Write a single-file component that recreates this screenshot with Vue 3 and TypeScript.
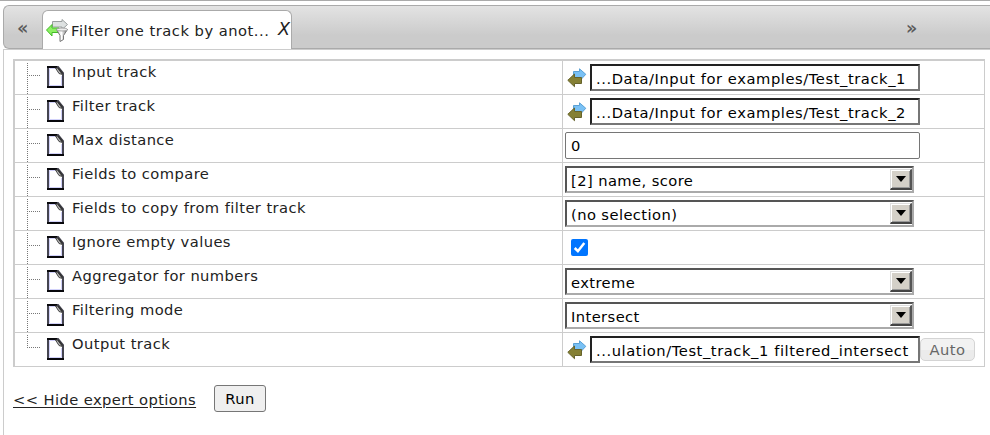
<script setup lang="ts">
interface Field {
  label: string
  kind: 'track' | 'text' | 'select' | 'check'
  value?: string
  auto?: boolean
}

const fields: Field[] = [
  { label: 'Input track', kind: 'track', value: '...Data/Input for examples/Test_track_1' },
  { label: 'Filter track', kind: 'track', value: '...Data/Input for examples/Test_track_2' },
  { label: 'Max distance', kind: 'text', value: '0' },
  { label: 'Fields to compare', kind: 'select', value: '[2] name, score' },
  { label: 'Fields to copy from filter track', kind: 'select', value: '(no selection)' },
  { label: 'Ignore empty values', kind: 'check' },
  { label: 'Aggregator for numbers', kind: 'select', value: 'extreme' },
  { label: 'Filtering mode', kind: 'select', value: 'Intersect' },
  { label: 'Output track', kind: 'track', value: '...ulation/Test_track_1 filtered_intersect', auto: true },
]
</script>

<template>
  <div class="page">
    <nav class="tabs">
      <span class="scroll prev">«</span>
      <div class="tab">
        <svg class="tab-icon" width="24" height="24" viewBox="0 0 24 24">
          <defs>
            <linearGradient id="steel" x1="0" x2="1"><stop offset="0" stop-color="#ccc" /><stop offset=".45" stop-color="#fff" /><stop offset="1" stop-color="#666" /></linearGradient>
          </defs>
          <path d="M6.500 2.500h9.500V.5l5.500 5-5.500 5V8H6.500z" fill="#dde1e1" stroke="#9a9f9f" />
          <path d="M.5 11 6 5.500V9h7v4.500H6V17z" fill="#8cf062" stroke="#43bb28" />
          <path d="M10.500 10.500h11l-4 6v4l-3.500 2v-6z" fill="url(#steel)" stroke="#777" stroke-linejoin="round" />
          <ellipse cx="16" cy="10.500" rx="5.500" ry="1.500" fill="#eee" stroke="#888" stroke-width=".7" />
        </svg>
        <span class="title">Filter one track by anot...</span>
        <span class="close">X</span>
      </div>
      <span class="scroll next">»</span>
    </nav>
    <main class="panel">
      <div class="grid">
        <div v-for="(f, i) in fields" :key="f.label" class="row">
          <div class="name">
            <svg class="branch" width="14" height="33" viewBox="0 0 14 33">
              <path :d="i === fields.length - 1 ? 'M.5 2V15' : 'M.5 2V33'" stroke="#777" stroke-dasharray="1 1" fill="none" />
              <path d="M2 14.500H13" stroke="#777" stroke-dasharray="1 1" fill="none" />
            </svg>
            <svg class="doc" width="17" height="22" viewBox="0 0 17 22">
              <path d="M1 1H11L16 7V21H1z" fill="#fff" stroke="#454550" stroke-width="2" />
              <path d="M2.500 19.500V2.500H9M14.500 10V19.500H2.500" fill="none" stroke="#d2d2fa" />
              <path d="M0 1H10M0 21H17" stroke="#08080c" stroke-width="2" />
              <path d="M8.500 2 12 7.500 15.500 8.500 11 2z" fill="#b5b5b5" stroke="#444" />
              <path d="m11 2 4.500 5.500" stroke="#333" stroke-width="1.500" />
            </svg>
            <span class="label">{{ f.label }}</span>
          </div>
          <div class="value">
            <template v-if="f.kind === 'track'">
              <svg class="swap" width="20" height="20" viewBox="0 0 20 20">
                <path d="M6.500 3.500h6V.8l6.300 5.500-5.300 5.700V9.500h-7z" fill="#79c1f5" stroke="#5ba1d5" stroke-linejoin="round" />
                <path d="M.8 12.300 7.500 6v3.500h7v6H7.500v3.200z" fill="#858034" stroke="#66632c" stroke-linejoin="round" />
              </svg>
              <div class="box track">{{ f.value }}</div>
              <button v-if="f.auto" class="auto" disabled>Auto</button>
            </template>
            <div v-else-if="f.kind === 'text'" class="box plain">{{ f.value }}</div>
            <div v-else-if="f.kind === 'select'" class="box select">
              <span>{{ f.value }}</span>
              <span class="drop">
                <svg width="10" height="6" viewBox="0 0 10 6"><path d="M0 0H10L5 6z" fill="#000" /></svg>
              </span>
            </div>
            <span v-else class="check">
              <svg width="17" height="17" viewBox="0 0 17 17"><path d="m3.700 9 3.200 3.200 6.400-8.200" fill="none" stroke="#fff" stroke-width="2.500" /></svg>
            </span>
          </div>
        </div>
      </div>
      <div class="actions">
        <a class="link">&lt;&lt; Hide expert options</a>
        <button class="run">Run</button>
      </div>
    </main>
  </div>
</template>

<style>
body { background: #fff; overflow: hidden; }
</style>

<style scoped>
* { box-sizing: border-box; }
.page {
  width: 990px;
  height: 435px;
  overflow: hidden;
  border-top: 1px solid #aaa;
  padding: 4px 0 0 3px;
  color: #222;
  font: 14.700px/20px Verdana, "DejaVu Sans", sans-serif;
  letter-spacing: 0.420px;
  white-space: nowrap;
}
.tabs {
  display: flex;
  height: 44px;
  border: solid #aaa;
  border-width: 1px 0 1px 1px;
  border-radius: 6px 0 0 6px;
  background: linear-gradient(#e3e3e3, #cbcbcb 70%, #cbcbcb);
}
.scroll { color: #555; font: 18.500px/43px "DejaVu Sans", sans-serif; letter-spacing: 0; -webkit-text-stroke: 0.200px #555; }
.prev { width: 38px; padding-left: 13px; }
.next { margin-left: 614px; }
.tab {
  display: flex;
  width: 250px;
  height: 39px;
  margin-top: 4px;
  padding-left: 3px;
  border: 1px solid #aaa;
  border-bottom: 0;
  border-radius: 6px 6px 0 0;
  background: #fff;
}
.tab-icon { margin-top: 8px; flex: none; }
.title { width: 207px; margin: 10px 0 0 1px; letter-spacing: 0.500px; }
.close { font: italic 17.500px/20px Verdana, "DejaVu Sans", sans-serif; margin-top: 8px; }
.panel { height: 390px; border: solid #ccc; border-width: 1px 0 0 1px; padding: 9px 0 0 9px; }
.grid { width: 972px; border: solid #ccc; border-width: 2px 1px 0 2px; }
.row { display: flex; height: 34px; border-bottom: 1px solid #ccc; }
.name { display: flex; width: 548px; padding-left: 12px; border-right: 1px solid #ccc; }
.branch { margin-right: 6px; }
.doc { margin: 5px 8px 0 0; }
.label { line-height: 21px; }
.value { display: flex; padding: 3px 0 0 2px; }
.swap { margin: 4px 3px 0 2px; }
.box { height: 27px; line-height: 26px; color: #000; background: #fff; }
.track { width: 330px; padding-left: 4px; letter-spacing: 0.570px; border: 2px solid #767676; border-top-color: #222; border-left-color: #222; }
.plain { width: 355px; padding-left: 5px; border: 1px solid #767676; border-radius: 2px; }
.select { display: flex; justify-content: space-between; width: 349px; padding-left: 4px; border: 2px solid #aaa; border-top-color: #555; border-left-color: #555; }
.drop {
  display: flex;
  align-items: center;
  justify-content: center;
  width: 22px;
  height: 21px;
  margin-top: 1px;
  border: solid;
  border-width: 1px 2px 2px 1px;
  border-color: #ddd #555 #444 #ddd;
  box-shadow: inset 1px 1px #fff, inset -1px -1px #999;
  background: #d4d0c8;
}
.check { width: 17px; height: 17px; margin: 5px 0 0 6px; border-radius: 2px; background: #0075ff; }
.check svg { display: block; }
.auto {
  width: 55px;
  height: 23px;
  margin: 2px 0 0;
  padding: 0;
  border: 1px solid #d4d4d4;
  border-radius: 5px;
  background: linear-gradient(#f2f2f2 50%, #ebebeb 50%);
  color: #666;
  font: inherit;
  letter-spacing: 0.500px;
}
.actions { display: flex; align-items: flex-start; padding-top: 18px; }
.link { width: 201px; margin-top: 5px; text-decoration: underline; text-underline-offset: 2px; }
.run { width: 52px; height: 27px; padding: 0; border: 1px solid #767676; border-radius: 3px; background: #efefef; color: #000; font: inherit; letter-spacing: 0.400px; }
</style>
